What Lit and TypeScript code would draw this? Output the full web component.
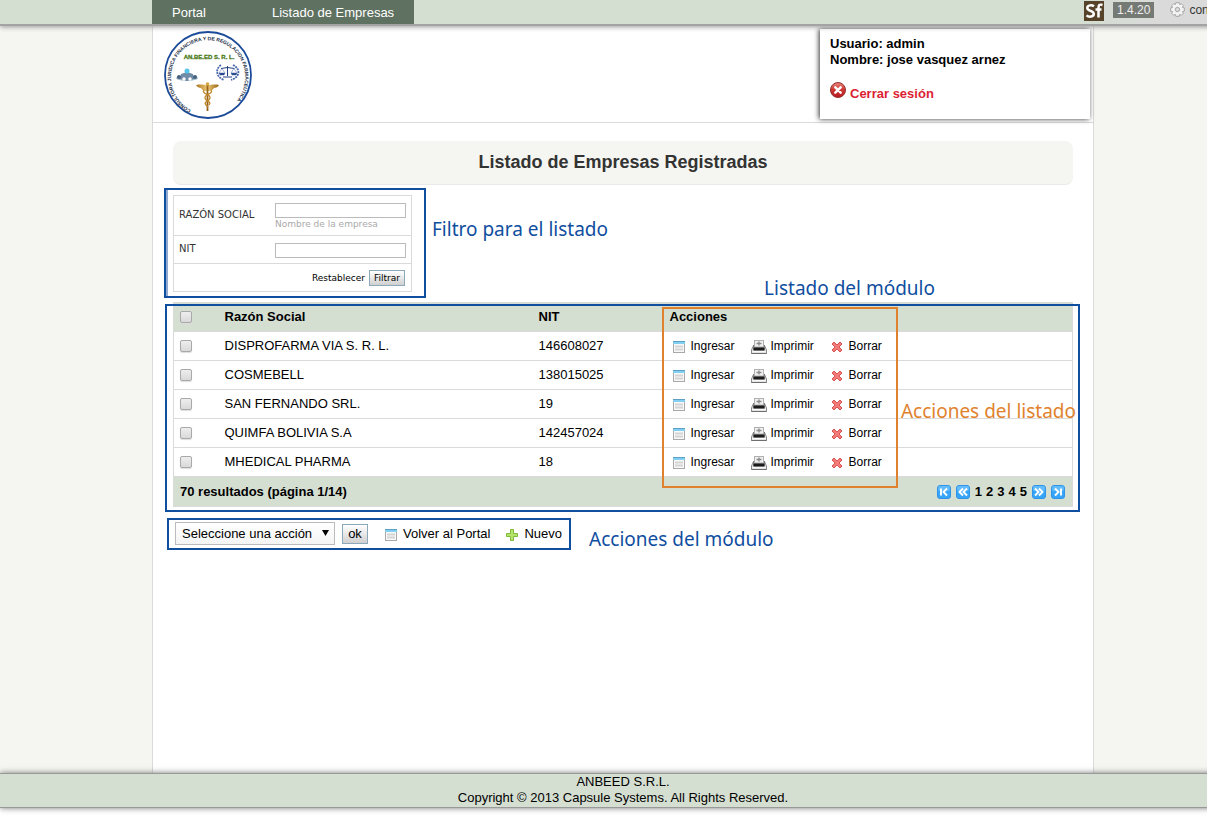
import { LitElement, html, css, svg } from "lit";
import { customElement, state } from "lit/decorators.js";

interface Company {
  name: string;
  nit: string;
}

const COMPANIES: Company[] = [
  { name: "DISPROFARMA VIA S. R. L.", nit: "146608027" },
  { name: "COSMEBELL", nit: "138015025" },
  { name: "SAN FERNANDO SRL.", nit: "19" },
  { name: "QUIMFA BOLIVIA S.A", nit: "142457024" },
  { name: "MHEDICAL PHARMA", nit: "18" },
];

const windowIcon = html`<svg class="icon" width="12" height="12" viewBox="0 0 12 12" aria-hidden="true">
  <rect x=".5" y=".5" width="11" height="11" fill="#f8f8f8" stroke="#a9a9a9" />
  <rect x="0" y="0" width="12" height="1" fill="#5e9fc4" />
  <rect x="0" y="1" width="12" height="2" fill="#82cff2" />
  <path d="M2 5.500h8M2 8.500h8" stroke="#d4d4d4" stroke-width="2" />
</svg>`;

const printIcon = html`<svg class="icon" width="16" height="14" viewBox="0 0 16 14" aria-hidden="true">
  <path d="M2.500 5.500h11l2 4.500v3.500H.5V10z" fill="#e4e4e4" stroke="#8a8a8a" />
  <path d="M2.500 5h11v5.500h-11z" fill="#4a4a4a" />
  <rect x="3.500" y=".5" width="9" height="6.500" fill="#f0f0f0" stroke="#b0b0b0" />
  <path d="M8 1.500v4M5.500 3.500h5" stroke="#8c8c8c" stroke-width="1.400" />
  <path d="M2.500 9h11" stroke="#1c1c1c" stroke-width="2.600" />
  <path d="M1.500 11.500h13" stroke="#fafafa" />
  <path d="M.5 13.500h15" stroke="#6e6e6e" />
</svg>`;

const deleteIcon = html`<svg class="icon" width="12" height="12" viewBox="0 0 12 12" aria-hidden="true">
  <path d="M1 3l2-2 3 3 3-3 2 2-3 3 3 3-2 2-3-3-3 3-2-2 3-3z" fill="#f47c78" stroke="#d65552" stroke-linejoin="round" />
</svg>`;

const plusIcon = html`<svg class="icon" width="12" height="12" viewBox="0 0 12 12" aria-hidden="true">
  <path d="M4.500.5h3v4h4v3h-4v4h-3v-4h-4v-3h4z" fill="#b4e56a" stroke="#7fba3c" stroke-linejoin="round" />
</svg>`;

const closeIcon = html`<svg width="16" height="16" viewBox="0 0 16 16" aria-hidden="true">
  <defs>
    <linearGradient id="red" x2="0" y2="1">
      <stop stop-color="#e98a80" />
      <stop offset=".45" stop-color="#cf3a34" />
      <stop offset="1" stop-color="#b81822" />
    </linearGradient>
  </defs>
  <circle cx="8" cy="8" r="7.500" fill="url(#red)" stroke="#93302e" />
  <path d="M5.300 5.300l5.400 5.400M10.700 5.300l-5.400 5.400" stroke="#fff" stroke-width="2.400" stroke-linecap="round" />
</svg>`;

const gearIcon = html`<svg width="15" height="15" viewBox="0 0 15 15" aria-hidden="true">
  <path
    d="M5.800.7h3.400l.4 1.800 1.700-.8 2 2-.9 1.700 1.900.4v3.400l-1.900.4.9 1.700-2 2-1.700-.9-.4 1.900H5.800l-.4-1.900-1.700.9-2-2 .9-1.700-1.900-.4V5.800l1.900-.4-.9-1.700 2-2 1.700.8z"
    fill="#f3f3f3"
    stroke="#a6a6a6"
    stroke-linejoin="round"
  />
  <circle cx="7.500" cy="7.500" r="2.200" fill="#dadada" stroke="#a6a6a6" />
</svg>`;

const pagerGlyphs: Record<string, string> = {
  first: "M4 3.500v7M10 3.500L6.500 7l3.500 3.500",
  prev: "M7 3.500L3.500 7 7 10.500M11 3.500L7.500 7l3.500 3.500",
  next: "M3 3.500L6.500 7 3 10.500M7 3.500l3.500 3.500L7 10.500",
  last: "M10 3.500v7M4 3.500L7.500 7 4 10.500",
};

const pagerIcon = (kind: string) => html`<svg width="14" height="14" viewBox="0 0 14 14" aria-hidden="true">
  <rect x=".5" y=".5" width="13" height="13" rx="2.500" fill="#36a5f8" stroke="#2f93ea" />
  <rect x="1" y="1" width="12" height="5" rx="2" fill="#62bcfb" />
  ${svg`<path d=${pagerGlyphs[kind]} fill="none" stroke="#fff" stroke-width="1.900" />`}
</svg>`;

const logo = html`<svg width="90" height="90" viewBox="0 -1 90 90" role="img" aria-label="ANBEED S.R.L.">
  <defs>
    <path id="ring" d="M28 80A37 37 0 1 1 64 79" />
    <linearGradient id="gold"><stop stop-color="#a8741c" /><stop offset=".5" stop-color="#efc978" /><stop offset="1" stop-color="#94600f" /></linearGradient>
  </defs>
  <circle cx="45" cy="45" r="43" fill="#fff" stroke="#1a4a98" stroke-width="1.800" />
  <text class="ring-text"><textPath href="#ring">CONSULTORA JURIDICA FINANCIERA Y DE REGULACION FARMACEUTICA</textPath></text>
  <text class="logo-name" x="46" y="29" text-anchor="middle">AN.BE.ED S. R. L.</text>
  <g>
    <ellipse cx="24" cy="48" rx="11" ry="3" fill="#a5bac8" />
    <path d="M18 44l6-2 6 2 1 5-7 2-7-2z" fill="#6f8ba5" />
    <circle cx="24" cy="41" r="2.500" fill="#55c5ed" />
    <circle cx="16" cy="47" r="2" fill="#45617e" /><circle cx="32" cy="47" r="2" fill="#45617e" />
    <circle cx="21" cy="49" r="1.700" fill="#fff" /><circle cx="27" cy="49" r="1.700" fill="#fff" />
  </g>
  <g fill="none" stroke="#4b69a8">
    <path d="M58 35c-6 4-5 12 3 15M70 35c8 4 7 12-2 15" stroke-width="1.800" stroke-dasharray="2 .8" />
    <path d="M64.500 36v10M58 38.500l6.500-1 7 1M60 47h9" stroke="#243f86" />
    <path d="M56 43h6l-1 2h-4zM68 43h6l-1 2h-4z" fill="#243f86" stroke-width=".5" />
    <path d="M59 38.500l-3 4.500M59 38.500l3 4.500M71 38.500l-3 4.500M71 38.500l3 4.500" stroke-width=".5" />
  </g>
  <path d="M44 55c-3 0-6-1-11 0 1 2 3 3 5 3 1 2 3 3 6 3zM45 55c3 0 6-1 11 0-1 2-3 3-5 3-1 2-3 3-6 3z" fill="url(#gold)" />
  <path d="M44.500 54v27" stroke="#96641a" stroke-width="1.800" />
  <circle cx="44.500" cy="54" r="1.800" fill="#d8a544" />
  <path d="M41 60c-3 4 7 4 6 8s-7 3-4 7l2 2M48 60c3 4-7 4-6 8s7 3 4 7" fill="none" stroke="#c1892f" stroke-width="1.300" />
</svg>`;

@customElement("app-root")
export class AppRoot extends LitElement {
  @state() private selected: boolean[] = COMPANIES.map(() => false);

  static styles = css`
    :host {
      display: block;
      overflow: hidden;
      background: #fff;
      color: #000;
      font: 13px/16px "Liberation Sans", Arial, sans-serif;
    }
    * { box-sizing: border-box; }
    a { color: inherit; text-decoration: none; }
    svg { display: block; flex: none; }
    .page {
      width: calc(100% + 39px);
      min-height: 100vh;
      display: flex;
      flex-direction: column;
      background: #f5f6f1;
    }
    .wrap { width: 942px; margin: 0 auto; }

    .topbar {
      position: relative;
      z-index: 1;
      background: #d4ded1;
      border-bottom: 2px solid #a3a3a3;
      box-shadow: 0 1px 5px #999;
    }
    .menu { display: flex; }
    .menu a {
      min-width: 100px;
      padding: 5px 20px 3px;
      background: #5f7262;
      color: #fff;
    }
    .debug {
      position: absolute;
      top: 0;
      right: 0;
      width: 168px;
      height: 24px;
      display: flex;
      align-items: flex-start;
      gap: 9px;
      padding: 1px 6px;
      background: linear-gradient(90deg, #d4ded1, #dadada 50%);
      font-size: 12px;
      color: #333;
    }
    .version { margin-top: 1px; padding: 0 4px; background: #767a75; color: #eee; }
    .config { display: flex; gap: 4px; margin: 1px 0 0 7px; }

    .content {
      flex: 1;
      display: flex;
      flex-direction: column;
      background: #fff;
      border: solid #dadada;
      border-width: 0 1px;
    }
    .header {
      display: flex;
      justify-content: space-between;
      padding: 3px 3px 3px 10px;
      border-bottom: 1px solid #dadada;
    }
    .user {
      width: 270px;
      height: 90px;
      padding: 7px 10px;
      background: #fff;
      box-shadow: -1px 0 5px #333;
      font-weight: bold;
    }
    .user p { margin: 0; }
    .logout { display: flex; align-items: baseline; gap: 4px; margin-top: 14px; color: #dc1e32; }
    .body { padding: 18px 20px 0; flex: 1; }
    h1 {
      margin: 0;
      padding: 10px;
      border-radius: 8px;
      border-bottom: 1px solid #e8e9ea;
      background: #f5f6f1;
      font-size: 18px;
      line-height: 23px;
      text-align: center;
      color: #333;
    }

    .section { position: relative; }
    .mark { position: absolute; border: 2px solid #104ea0; pointer-events: none; }
    .note {
      position: absolute;
      font: 19px/24px "Noto Sans", "Open Sans", sans-serif;
      color: #104ea0;
      white-space: nowrap;
      pointer-events: none;
    }
    .orange { border-color: #e0822d; color: #e0822d; }

    .filter {
      width: 239px;
      margin: 10px 0;
      border: 1px solid #dadada;
      font: 9px/12px "DejaVu Sans", sans-serif;
    }
    .field {
      display: grid;
      grid-template-columns: 96px 1fr;
      align-items: center;
      padding: 7px 5px 5px;
      border-bottom: 1px solid #dadada;
      color: #333;
    }
    .field label { margin-bottom: 4px; font-size: 10px; line-height: 11px; }
    .field input {
      display: block;
      width: 100%;
      height: 15px;
      padding: 0 2px;
      border: 1px solid #bbb;
      background: #fff;
      font: inherit;
    }
    .hint { display: block; color: #aaa; }
    .filter-actions { display: flex; justify-content: flex-end; align-items: center; gap: 4px; padding: 6px 6px 5px; }
    button {
      margin: 0;
      border: 1px solid #8ba9b8;
      background: linear-gradient(#fff, #d0d0d0);
      color: #000;
      font: inherit;
    }
    .filter button { height: 16px; padding: 0 4px; }
    .mark-filter { inset: -7px auto -6px -9px; width: 262px; box-shadow: inset 2px 0 #8fabd2; }
    .note-filter { left: 259px; top: 22px; }

    table { width: 100%; border-collapse: collapse; table-layout: fixed; border: 1px solid #dadada; }
    th, td { height: 29px; padding: 0 7px 0 6px; text-align: left; border-bottom: 1px solid #dadada; }
    thead, tfoot { background: #d4ded1; }
    tfoot td { height: 30px; font-weight: bold; }
    .c-check { width: 45px; }
    .c-name { width: 314px; }
    .c-nit { width: 131px; }
    input[type="checkbox"] {
      appearance: none;
      display: block;
      width: 12px;
      height: 12px;
      margin: 0;
      border: 1px solid #a9a9a9;
      border-radius: 2px;
      background: linear-gradient(#eee, #d9d9d9);
      box-shadow: 0 1px 1px #ddd;
    }
    input[type="checkbox"]:checked { background: #5f7262; }
    .actions { display: grid; grid-template-columns: 78px 80px auto; padding-left: 3px; font-size: 12px; }
    .action { display: flex; align-items: center; gap: 6px; }
    .action.print { gap: 4px; }
    .icon { position: relative; top: 1px; }
    .foot { display: flex; justify-content: space-between; align-items: center; }
    .pager { display: flex; align-items: center; gap: 5px; }
    .numbers { display: flex; gap: 4px; }
    .mark-list { inset: 2px -7px -5px -8px; }
    .note-list { right: 138px; top: -26px; }
    .mark-actions { left: 489px; top: 5px; bottom: 19px; width: 236px; }
    .note-actions { right: -3px; top: 97px; }

    .tools { display: flex; align-items: center; width: 404px; margin: 11px 0 0 -6px; padding: 4px 8px 5px; }
    .tools .mark { inset: 0; }
    .select { position: relative; width: 160px; margin-right: 7px; }
    select {
      appearance: none;
      display: block;
      width: 100%;
      height: 23px;
      padding: 0 6px;
      border: 1px solid #bbb;
      border-radius: 0;
      background: linear-gradient(#fff, #f4f4f4);
      color: #000;
      font: inherit;
    }
    .arrow { position: absolute; right: 6px; top: 8px; pointer-events: none; }
    .tools button { width: 26px; height: 20px; padding: 0; margin-right: 17px; }
    .tools .action + .action { margin-left: 16px; }
    .note-tools { left: 422px; top: 9px; }

    footer {
      position: relative;
      margin-bottom: 8px;
      padding-bottom: 1px;
      border: solid #999;
      border-width: 1px 0;
      background: #d4ded1;
      box-shadow: 0 0 6px #777;
      text-align: center;
    }
    footer p { margin: 0; }
    .tail { background: #fff; }
    .ring-text { font: bold 5px "Liberation Sans", sans-serif; fill: #1c2f48; }
    .logo-name { font: bold 6px "Liberation Sans", sans-serif; fill: #4d7c1c; stroke: #4d7c1c; stroke-width: 0.3; }
  `;

  private toggleAll(e: Event) {
    const on = (e.target as HTMLInputElement).checked;
    this.selected = this.selected.map(() => on);
  }

  private toggle(i: number) {
    this.selected = this.selected.map((v, n) => (n === i ? !v : v));
  }

  render() {
    return html`
      <div class="page">
        <div class="topbar">
          <nav class="menu wrap">
            <a href="#">Portal</a>
            <a href="#">Listado de Empresas</a>
          </nav>
          <div class="debug">
            <svg width="20" height="20" viewBox="0 0 20 20" role="img" aria-label="Sf">
              <rect width="20" height="20" fill="#57432a" />
              <path d="M10 5.300C8 3.800 3.300 3.800 3.300 7s6.500 2.500 6.500 5.800-5 3.500-7.300 1.600M18.500 4c-3-1-4 0-4 3v9.500M11.500 8.500h6" fill="none" stroke="#fff" stroke-width="2.500" />
            </svg>
            <span class="version">1.4.20</span>
            <a class="config" href="#">${gearIcon}config</a>
          </div>
        </div>

        <div class="content wrap">
          <header class="header">
            ${logo}
            <div class="user">
              <p>Usuario: admin</p>
              <p>Nombre: jose vasquez arnez</p>
              <a class="logout" href="#">${closeIcon}Cerrar sesión</a>
            </div>
          </header>

          <main class="body">
            <h1>Listado de Empresas Registradas</h1>

            <section class="section">
              <form class="filter" @submit=${(e: Event) => e.preventDefault()}>
                <div class="field">
                  <label for="razon">RAZÓN SOCIAL</label>
                  <div>
                    <input id="razon" type="text" aria-describedby="razon-hint" />
                    <span class="hint" id="razon-hint">Nombre de la empresa</span>
                  </div>
                </div>
                <div class="field">
                  <label for="nit">NIT</label>
                  <input id="nit" type="text" />
                </div>
                <div class="filter-actions">
                  <a href="#">Restablecer</a>
                  <button type="submit">Filtrar</button>
                </div>
              </form>
              <div class="mark mark-filter"></div>
              <div class="note note-filter">Filtro para el listado</div>
            </section>

            <section class="section">
              <table>
                <thead>
                  <tr>
                    <th class="c-check"><input type="checkbox" aria-label="Seleccionar todo" @change=${this.toggleAll} /></th>
                    <th class="c-name">Razón Social</th>
                    <th class="c-nit">NIT</th>
                    <th>Acciones</th>
                  </tr>
                </thead>
                <tbody>
                  ${COMPANIES.map(
                    (c, i) => html`<tr>
                      <td>
                        <input type="checkbox" aria-label=${c.name} .checked=${this.selected[i]} @change=${() => this.toggle(i)} />
                      </td>
                      <td>${c.name}</td>
                      <td>${c.nit}</td>
                      <td>
                        <div class="actions">
                          <a class="action" href="#">${windowIcon}Ingresar</a>
                          <a class="action print" href="#">${printIcon}Imprimir</a>
                          <a class="action" href="#">${deleteIcon}Borrar</a>
                        </div>
                      </td>
                    </tr>`,
                  )}
                </tbody>
                <tfoot>
                  <tr>
                    <td colspan="4">
                      <div class="foot">
                        <span>70 resultados (página 1/14)</span>
                        <nav class="pager" aria-label="Páginas">
                          <a href="#" aria-label="Primera">${pagerIcon("first")}</a>
                          <a href="#" aria-label="Anterior">${pagerIcon("prev")}</a>
                          <span class="numbers">${[1, 2, 3, 4, 5].map((n) => html`<a href="#">${n}</a>`)}</span>
                          <a href="#" aria-label="Siguiente">${pagerIcon("next")}</a>
                          <a href="#" aria-label="Última">${pagerIcon("last")}</a>
                        </nav>
                      </div>
                    </td>
                  </tr>
                </tfoot>
              </table>
              <div class="mark mark-list"></div>
              <div class="mark mark-actions orange"></div>
              <div class="note note-list">Listado del módulo</div>
              <div class="note note-actions orange">Acciones del listado</div>
            </section>

            <section class="section tools">
              <div class="select">
                <select aria-label="Acción">
                  <option>Seleccione una acción</option>
                </select>
                <svg class="arrow" width="7" height="6" viewBox="0 0 7 6" aria-hidden="true"><path d="M0 0h7L3.500 6z" /></svg>
              </div>
              <button type="button">ok</button>
              <a class="action" href="#">${windowIcon}Volver al Portal</a>
              <a class="action" href="#">${plusIcon}Nuevo</a>
              <div class="mark"></div>
              <div class="note note-tools">Acciones del módulo</div>
            </section>
          </main>
        </div>

        <div class="tail">
          <footer>
            <p>ANBEED S.R.L.</p>
            <p>Copyright © 2013 Capsule Systems. All Rights Reserved.</p>
          </footer>
        </div>
      </div>
    `;
  }
}
